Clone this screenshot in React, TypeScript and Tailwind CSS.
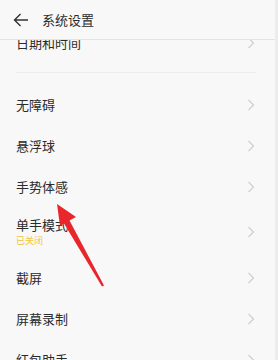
import React from 'react';

const font = { fontFamily: '"Noto Sans CJK SC", "Noto Sans", sans-serif' };

const Chevron = () => (
  <svg width="8" height="12" viewBox="0 0 8 12" className="shrink-0">
    <path d="M1.5 1 L6.5 6 L1.5 11" fill="none" stroke="#cfcfcf" strokeWidth="1.2" />
  </svg>
);

const Row = ({ title, sub }: { title: string; sub?: string }) => (
  <div className={`flex items-center justify-between pl-4 pr-[20px] ${sub ? 'h-[50px]' : 'h-[41px]'}`}>
    <div className="flex flex-col">
      <span className="text-[13px] leading-[18px] text-[#2b2b2b]">{title}</span>
      {sub && <span className="text-[9px] leading-[14px] text-[#f2c43c]">{sub}</span>}
    </div>
    <Chevron />
  </div>
);

export default function App() {
  return (
    <div className="relative w-[278px] h-[360px] overflow-hidden bg-[#f8f8f8] border-r-[3px] border-[#ececec]" style={font}>
      <div className="relative z-10 h-[40px] flex items-center bg-[#f8f8f8] border-b border-[#e3e3e3]">
        <svg width="16" height="14" viewBox="0 0 16 14" className="ml-[13px]">
          <path d="M15 7 H1.5 M7.5 1 L1.5 7 L7.5 13" fill="none" stroke="#333" strokeWidth="1.4" />
        </svg>
        <span className="ml-[13px] text-[13px] text-[#2b2b2b]">系统设置</span>
      </div>

      <div className="-mt-[18px]">
        <Row title="日期和时间" />
        <div className="pt-[9px] pb-[11px] pl-4 pr-[19px]">
          <div className="h-px bg-[#ececec]" />
        </div>
        <Row title="无障碍" />
        <Row title="悬浮球" />
        <Row title="手势体感" />
        <Row title="单手模式" sub="已关闭" />
        <Row title="截屏" />
        <Row title="屏幕录制" />
        <Row title="红包助手" />
      </div>

      <svg className="absolute left-0 top-0 z-20" width="278" height="360" viewBox="0 0 278 360">
        <polygon
          points="57,204 76,217 69.5,220.5 104,285.5 102,286.5 64,223.5 60,226"
          fill="#e8262b"
        />
      </svg>
    </div>
  );
}
